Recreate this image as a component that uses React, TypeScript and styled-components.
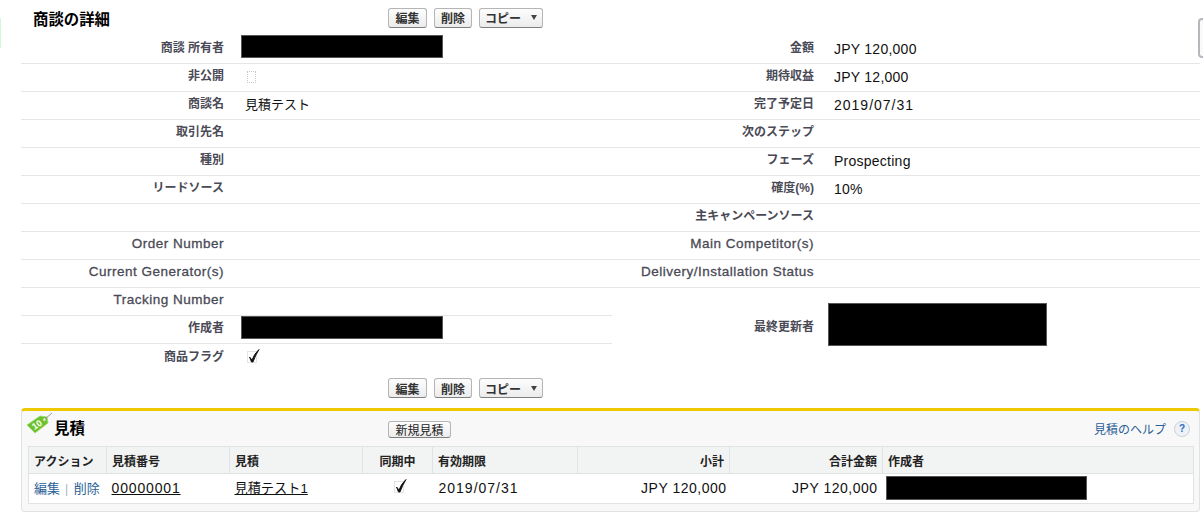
import React from 'react';
import styled, { createGlobalStyle } from 'styled-components';

const FONT = `"Liberation Sans", "Noto Sans CJK JP", sans-serif`;

const GlobalStyle = createGlobalStyle`
	html, body {
		margin: 0;
		background: #fff;
		font-family: ${FONT};
		color: #000;
	}
`;

const Page = styled.div`
	position: relative;
	width: 1203px;
	height: 514px;
	overflow: hidden;
	box-sizing: border-box;
	padding-left: 21px;
`;

const EdgeTabLeft = styled.div`
	position: absolute;
	left: 0;
	top: 18px;
	width: 1px;
	height: 30px;
	background: #d3f7dc;
`;

const EdgeTabRight = styled.div`
	position: absolute;
	left: 1198px;
	top: 18px;
	width: 8px;
	height: 40px;
	box-sizing: border-box;
	border: 2px solid #b4b8bd;
	border-radius: 5px;
	background: #fafafa;
`;

const Detail = styled.section`
	width: 1179px;
`;

const TitleBar = styled.div`
	display: flex;
	align-items: center;
	height: 36px;
	padding-bottom: 1px;
	box-sizing: border-box;
`;

const Title = styled.h2`
	width: 355px;
	margin: 4px 0 0 12px;
	font-size: 15.4px;
	font-weight: 700;
	line-height: 20px;
`;

const ButtonRow = styled.div`
	display: flex;
	gap: 7px;
`;

const Button = styled.button<{ $w: number }>`
	display: flex;
	align-items: center;
	justify-content: center;
	gap: 10px;
	width: ${(p) => p.$w}px;
	height: 20px;
	padding: 0;
	box-sizing: border-box;
	border: 1px solid #b5b5b5;
	border-bottom-color: #7f7f7f;
	border-radius: 3px;
	background: linear-gradient(#fdfdfd, #ececec);
	color: #333;
	font-family: ${FONT};
	font-size: 12px;
	font-weight: 700;
`;

const Caret = styled.span`
	width: 0;
	height: 0;
	border-left: 3.5px solid transparent;
	border-right: 3.5px solid transparent;
	border-top: 5px solid #444;
`;

const Columns = styled.div`
	display: grid;
	grid-template-columns: 591px 588px;
	align-items: start;
`;

const Column = styled.div`
	display: flex;
	flex-direction: column;
`;

const Row = styled.div<{ $tall?: boolean; $plain?: boolean }>`
	display: grid;
	grid-template-columns: 203px 1fr;
	align-items: center;
	height: ${(p) => (p.$tall ? 72 : 28)}px;
	box-sizing: border-box;
	border-bottom: ${(p) => (p.$plain ? 'none' : '1px solid #e6e6e6')};
`;

const RightRow = styled(Row)`
	grid-template-columns: 202px 1fr;
`;

// Latin captions run wider and lighter than the Japanese ones in the original
const Label = styled.div<{ $latin?: boolean }>`
	text-align: right;
	color: #4a4a56;
	font-size: ${(p) => (p.$latin ? 13.5 : 12)}px;
	letter-spacing: ${(p) => (p.$latin ? 0.5 : 0)}px;
	font-weight: ${(p) => (p.$latin ? 400 : 700)};
	-webkit-text-stroke: ${(p) => (p.$latin ? '0.3px #4a4a56' : '0')};
	line-height: 16px;
	margin-top: -3px;
	white-space: nowrap;
`;

const TallLabel = styled(Label)`
	margin-top: 6px;
`;

const Value = styled.div`
	padding-left: 21px;
	margin-top: -2px;
	font-size: 13px;
	line-height: 18px;
	color: #111;
	white-space: nowrap;
`;

const RightValue = styled(Value)<{ $date?: boolean }>`
	padding-left: 20px;
	font-size: 14px;
	letter-spacing: ${(p) => (p.$date ? 1 : 0.25)}px;
`;

const Redaction = styled.div<{ $w: number; $h: number; $left: number; $top?: number }>`
	width: ${(p) => p.$w}px;
	height: ${(p) => p.$h}px;
	margin-left: ${(p) => p.$left}px;
	margin-top: ${(p) => p.$top ?? 0}px;
	align-self: ${(p) => (p.$top === undefined ? 'center' : 'start')};
	background: #000;
	border: 1px solid #555;
	box-sizing: border-box;
`;

const EmptyCheck = styled.div`
	width: 7px;
	height: 10px;
	margin: -2px 0 0 23px;
	border: 1px dotted #c8c8c8;
`;

const CheckSvg = styled.svg<{ $left?: number }>`
	display: block;
	width: 14px;
	height: 16px;
	margin-top: -4px;
	margin-left: ${(p) => p.$left ?? 0}px;
`;

const BottomButtons = styled.div`
	height: 36px;
	padding: 6px 0 0 367px;
	box-sizing: border-box;
`;

const Related = styled.section`
	width: 1179px;
	height: 104px;
	box-sizing: border-box;
	border: 1px solid #e0e3e5;
	border-top: 3px solid #eec900;
	border-radius: 4px;
	background: #f8f8f8;
`;

const RelatedHeader = styled.div`
	display: flex;
	align-items: center;
	height: 35px;
	box-sizing: border-box;
`;

const RelatedTitle = styled.h3`
	width: 334px;
	margin: -4px 0 0;
	font-size: 15.5px;
	font-weight: 700;
`;

const TagIcon = styled.svg`
	width: 28px;
	height: 24px;
	margin-left: 4px;
	margin-top: -9px;
`;

const SmallButton = styled(Button)`
	height: 17px;
	margin-top: 1px;
	font-weight: 400;
	color: #222;
`;

const HelpArea = styled.div`
	display: flex;
	align-items: center;
	gap: 8px;
	margin-left: auto;
	padding-right: 9px;
`;

const HelpLink = styled.a`
	color: #2b5f96;
	font-size: 12px;
`;

const HelpIcon = styled.span`
	display: flex;
	align-items: center;
	justify-content: center;
	width: 14px;
	height: 14px;
	border-radius: 50%;
	border: 1px solid #c9d3dc;
	background: #eef2f6;
	color: #2a6bc0;
	font-size: 10px;
	font-weight: 700;
`;

const Table = styled.table`
	width: 1165px;
	margin-left: 6px;
	border-collapse: collapse;
	table-layout: fixed;
	background: #fff;
	border: 1px solid #e0e3e5;
`;

const HeadCell = styled.th<{ $align?: string }>`
	height: 27px;
	padding: 0 5px;
	box-sizing: border-box;
	background: #f2f3f3;
	border-right: 1px solid #e0e3e5;
	border-bottom: 1px solid #e0e3e5;
	font-size: 12px;
	font-weight: 700;
	color: #222;
	text-align: ${(p) => p.$align ?? 'left'};
	white-space: nowrap;
	&:last-child {
		border-right: none;
	}
`;

const Cell = styled.td<{ $right?: number; $date?: boolean }>`
	height: 30px;
	padding: 0 ${(p) => p.$right ?? 3}px 2px ${(p) => (p.$date ? 6 : 5)}px;
	box-sizing: border-box;
	font-size: 14px;
	letter-spacing: ${(p) => (p.$date ? 1 : 0.5)}px;
	color: #111;
	text-align: ${(p) => (p.$right ? 'right' : 'left')};
	white-space: nowrap;
`;

const ActionLink = styled.a`
	color: #2b5f96;
	font-size: 13px;
	letter-spacing: 0;
`;

const Divider = styled.span`
	margin: 0 5px;
	color: #9fb3c6;
	font-size: 12px;
`;

const NumberLink = styled.a`
	color: #111;
	text-decoration: underline;
	font-size: 14px;
	letter-spacing: 0.85px;
`;

const RecordLink = styled(NumberLink)`
	font-size: 13.2px;
	letter-spacing: 0;
`;

const CheckMark = ({ left }: { left: number }) => (
	<CheckSvg $left={left} viewBox="0 0 14 16">
		<rect x="0.5" y="3.5" width="9" height="11" fill="none" stroke="#c8c8c8" strokeDasharray="1 1" />
		<path d="M2.5 9 L5 12 Q7 6 12 1.5 Q8.5 7 6 14 L4.5 14 Z" fill="#111" stroke="#111" strokeWidth="0.9" />
	</CheckSvg>
);

const leftRows: { label: string; latin?: boolean; value?: React.ReactNode }[] = [
	{ label: '商談 所有者', value: <Redaction $w={202} $h={23} $left={17} $top={-1} /> },
	{ label: '非公開', value: <EmptyCheck /> },
	{ label: '商談名', value: <Value>見積テスト</Value> },
	{ label: '取引先名' },
	{ label: '種別' },
	{ label: 'リードソース' },
	{ label: '' },
	{ label: 'Order Number', latin: true },
	{ label: 'Current Generator(s)', latin: true },
	{ label: 'Tracking Number', latin: true },
	{ label: '作成者', value: <Redaction $w={202} $h={23} $left={17} $top={0} /> },
	{ label: '商品フラグ', value: <CheckMark left={23} /> },
];

const rightRows: { label: string; latin?: boolean; value?: string; date?: boolean }[] = [
	{ label: '金額', value: 'JPY 120,000' },
	{ label: '期待収益', value: 'JPY 12,000' },
	{ label: '完了予定日', value: '2019/07/31', date: true },
	{ label: '次のステップ' },
	{ label: 'フェーズ', value: 'Prospecting' },
	{ label: '確度(%)', value: '10%' },
	{ label: '主キャンペーンソース' },
	{ label: 'Main Competitor(s)', latin: true },
	{ label: 'Delivery/Installation Status', latin: true },
];

const columns: { title: string; width: number; align?: string }[] = [
	{ title: 'アクション', width: 78 },
	{ title: '見積番号', width: 123 },
	{ title: '見積', width: 133 },
	{ title: '同期中', width: 70, align: 'center' },
	{ title: '有効期限', width: 145 },
	{ title: '小計', width: 152, align: 'right' },
	{ title: '合計金額', width: 153, align: 'right' },
	{ title: '作成者', width: 311 },
];

const Actions = () => (
	<ButtonRow>
		<Button $w={39}>編集</Button>
		<Button $w={38}>削除</Button>
		<Button $w={64}>
			コピー
			<Caret />
		</Button>
	</ButtonRow>
);

export default function App() {
	return (
		<Page>
			<GlobalStyle />
			<EdgeTabLeft />
			<EdgeTabRight />
			<Detail>
				<TitleBar>
					<Title>商談の詳細</Title>
					<Actions />
				</TitleBar>
				<Columns>
					<Column>
						{leftRows.map((row, i) => (
							<Row key={i} $plain={i === leftRows.length - 1}>
								<Label $latin={row.latin}>{row.label}</Label>
								{row.value}
							</Row>
						))}
					</Column>
					<Column>
						{rightRows.map((row) => (
							<RightRow key={row.label}>
								<Label $latin={row.latin}>{row.label}</Label>
								{row.value && <RightValue $date={row.date}>{row.value}</RightValue>}
							</RightRow>
						))}
						<RightRow $tall $plain>
							<TallLabel>最終更新者</TallLabel>
							<Redaction $w={219} $h={43} $left={14} />
						</RightRow>
					</Column>
				</Columns>
				<BottomButtons>
					<Actions />
				</BottomButtons>
			</Detail>
			<Related>
				<RelatedHeader>
					<TagIcon viewBox="0 0 28 24">
						<path d="M1 13 L14 4 L21 5 L22 11 L9 21 Z" fill="#6cc22c" stroke="#9ed86e" strokeWidth="0.8" />
						<circle cx="18.5" cy="7.5" r="1.5" fill="#d8e8c8" />
						<path d="M19 7 L26 1" stroke="#999" strokeWidth="1" />
						<text x="6.5" y="16.5" fontSize="9" fontWeight="700" fill="#fff" fontFamily="Liberation Sans" transform="rotate(-35 10 14)">10</text>
					</TagIcon>
					<RelatedTitle>見積</RelatedTitle>
					<SmallButton $w={63}>新規見積</SmallButton>
					<HelpArea>
						<HelpLink>見積のヘルプ</HelpLink>
						<HelpIcon>?</HelpIcon>
					</HelpArea>
				</RelatedHeader>
				<Table>
					<colgroup>
						{columns.map((col) => (
							<col key={col.title} style={{ width: col.width }} />
						))}
					</colgroup>
					<thead>
						<tr>
							{columns.map((col) => (
								<HeadCell key={col.title} $align={col.align}>
									{col.title}
								</HeadCell>
							))}
						</tr>
					</thead>
					<tbody>
						<tr>
							<Cell>
								<ActionLink>編集</ActionLink>
								<Divider>|</Divider>
								<ActionLink>削除</ActionLink>
							</Cell>
							<Cell>
								<NumberLink>00000001</NumberLink>
							</Cell>
							<Cell>
								<RecordLink>見積テスト1</RecordLink>
							</Cell>
							<Cell>
								<CheckMark left={26} />
							</Cell>
							<Cell $date>2019/07/31</Cell>
							<Cell $right={3}>JPY 120,000</Cell>
							<Cell $right={5}>JPY 120,000</Cell>
							<Cell>
								<Redaction $w={201} $h={24} $left={-2} />
							</Cell>
						</tr>
					</tbody>
				</Table>
			</Related>
		</Page>
	);
}
